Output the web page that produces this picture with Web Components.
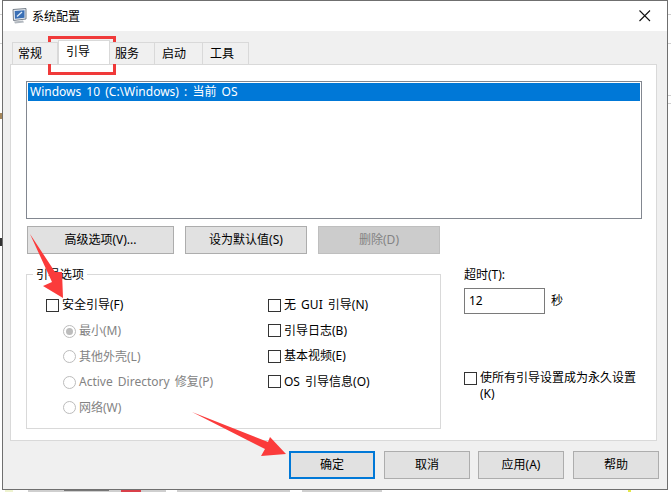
<!DOCTYPE html>
<html><head><meta charset="utf-8"><style>
html,body{margin:0;padding:0;background:#fff}
body{width:671px;height:492px;overflow:hidden;font:12px "Noto Sans","Noto Sans CJK SC",sans-serif;color:#000;position:relative}
</style></head><body>
<msc-window>
  <msc-tabs slot="tabs"></msc-tabs>
  <msc-boot slot="panel"></msc-boot>
  <win-btn slot="foot" focus style="width:86px">确定</win-btn>
  <win-btn slot="foot" style="width:86px;margin-left:9px">取消</win-btn>
  <win-btn slot="foot" style="width:86px;margin-left:8px">应用(A)</win-btn>
  <win-btn slot="foot" style="width:86px;margin-left:9px">帮助</win-btn>
</msc-window>
<msc-marks></msc-marks>
<script>
const F='"Noto Sans","Noto Sans CJK SC",sans-serif';
function def(name,css,html){
  customElements.define(name,class extends HTMLElement{
    constructor(){super();const s=this.attachShadow({mode:'open'});s.innerHTML='<style>'+css+'</style>'+html;}
  });
}
def('win-btn',`:host{display:flex;box-sizing:border-box;height:28px;align-items:center;justify-content:center;background:#e1e1e1;border:1px solid #adadad;font:12px/16px ${F};color:#000;white-space:nowrap}
:host([focus]){border:2px solid #0078d7}
:host([disabled]){background:#ccc;border-color:#bfbfbf;color:#838383}`,`<slot></slot>`);
def('win-check',`:host{display:flex;align-items:center;height:14px;font:12px/14px ${F};color:#000;white-space:pre;word-spacing:2px}
i{display:block;box-sizing:border-box;width:13px;height:13px;border:1px solid #333;background:#fff;margin-right:3px;flex:none}`,`<i></i><slot></slot>`);
def('win-radio',`:host{display:flex;align-items:center;height:14px;font:12px/14px ${F};color:#838383;white-space:pre;word-spacing:2px}
i{display:flex;align-items:center;justify-content:center;box-sizing:border-box;width:13px;height:13px;border:1px solid #bcbcbc;border-radius:50%;background:#fff;margin-right:3px;flex:none}
b{display:none;width:7px;height:7px;border-radius:50%;background:#bcbcbc}
:host([on]) b{display:block}`,`<i><b></b></i><slot></slot>`);
def('msc-window',`:host{box-sizing:border-box;width:666px;height:490px;margin-left:2px;border:1px solid #6f6f6f;background:#f0f0f0;display:flex;flex-direction:column}
.tb{height:30px;background:#fff;display:flex;align-items:center;flex:none;padding-left:8px;font:12px/16px ${F}}
.tb svg.ic{width:16px;height:16px;margin:-1px 5px 0 0;flex:none}
.tb span{flex:1;margin-top:1px}
.tb svg.x{width:12px;height:12px;margin-right:16px;flex:none}
.tabs{height:33px;padding:10px 0 0 7px;box-sizing:border-box;flex:none}
.panel{margin:0 9px 0 7px;height:377px;flex:none}
.foot{display:flex;padding:10px 0 0 286px}`,`
<div class="tb"><svg class="ic" viewBox="0 0 16 16"><path d="M2 1.5 15 .5v10.5L2.5 12.5z" fill="#e6ebf1" stroke="#6b7480" stroke-width=".9"/><path d="M3.7 3 13.5 2.2v7.5L4 10.8z" fill="#3a6fb5"/><path d="M6 8.5l5-4.5" stroke="#e0eefb" stroke-width="1.3"/><path d="M3 13.5 12 12.5l1 2-9 1z" fill="#b2b8bf"/></svg><span>系统配置</span><svg class="x" viewBox="0 0 12 12"><path d="M.5.5l10.5 10.5M11 .5.5 11" stroke="#111" stroke-width="1.1" fill="none"/></svg></div>
<div class="tabs"><slot name="tabs"></slot></div>
<div class="panel"><slot name="panel"></slot></div>
<div class="foot"><slot name="foot"></slot></div>`);
def('msc-tabs',`:host{display:flex;height:23px;position:relative;z-index:1;font:12px/16px ${F}}
div{box-sizing:border-box;height:22px;margin-top:1px;border:1px solid #d9d9d9;border-left:0;border-bottom:0;background:#f0f0f0;padding:3px 0 0 5px}
div:first-of-type{border-left:1px solid #d9d9d9;margin-left:2px}
div.on{height:24px;margin-top:-1px;background:#fff;padding:3px 0 0 7px;border-left:1px solid #d9d9d9}`,
`<div style="width:46px">常规</div><div class="on" style="width:52px">引导</div><div style="width:45px">服务</div><div style="width:48px;padding-left:7px">启动</div><div style="width:46px;padding-left:7px">工具</div>`);
def('msc-boot',`:host{display:block;box-sizing:border-box;width:647px;height:377px;background:#fff;border:1px solid #d9d9d9;padding:16px 15px 0 15px;font:12px/16px ${F}}
.list{box-sizing:border-box;height:138px;width:616px;border:1px solid #828790;padding:1px}
.sel{height:18px;background:#0078d7;color:#fff;padding-left:2px;line-height:18px;word-spacing:2px}
.btns{display:flex;margin-top:7px;padding-left:1px}
.low{display:flex;margin-top:20px}
.group{box-sizing:border-box;width:415px;height:155px;flex:none;border:1px solid #d9d9d9;position:relative;padding:23px 0 0 19px;display:flex}
.legend{position:absolute;left:6px;top:-8px;background:#fff;padding:0 3px;line-height:16px}
.c1{width:222px}
.c1 win-radio{margin-left:17px}
.c1 win-radio:first-of-type{margin-top:12px}
.gap win-radio,.gap win-check{margin-bottom:11.5px}
.side{margin-left:23px;position:relative;width:180px;flex:none}
.t{line-height:14px;margin-top:-6px}
.in{box-sizing:border-box;width:81px;height:26px;border:1px solid #7a7a7a;display:flex;align-items:center;padding-left:4px;margin-top:6px}
.row{display:flex;align-items:center}.sec{margin-left:6px}
.perm{margin-top:57px;display:flex;align-items:flex-start;width:180px}
.perm win-check{flex:none;width:16px}
.perm span{line-height:16px;margin-top:-1px}`,`
<div class="list"><div class="sel">Windows 10 (C:\\Windows) : 当前 OS</div></div>
<div class="btns">
<win-btn style="width:147px">高级选项(V)...</win-btn>
<win-btn style="width:122px;margin-left:11px">设为默认值(S)</win-btn>
<win-btn disabled style="width:122px;margin-left:11px">删除(D)</win-btn></div>
<div class="low"><div class="group"><div class="legend">引导选项</div>
<div class="c1 gap"><win-check>安全引导(F)</win-check><win-radio on>最小(M)</win-radio><win-radio>其他外壳(L)</win-radio><win-radio>Active Directory 修复(P)</win-radio><win-radio>网络(W)</win-radio></div>
<div class="c2 gap"><win-check>无 GUI 引导(N)</win-check><win-check>引导日志(B)</win-check><win-check>基本视频(E)</win-check><win-check>OS 引导信息(O)</win-check></div>
</div>
<div class="side"><div class="t">超时(T):</div><div class="row"><div class="in">12</div><div class="sec" style="margin-top:6px">秒</div></div>
<div class="perm"><win-check></win-check><span>使所有引导设置成为永久设置<br>(K)</span></div></div></div>`);
def('msc-marks',`:host{position:absolute;inset:0;display:block;pointer-events:none}
svg{position:absolute;left:0;top:0}`,`<svg width="671" height="492" viewBox="0 0 671 492">
<g fill="#cfcfcf"><rect x="0" y="14" width="2" height="1"/><rect x="0" y="43" width="2" height="1"/><rect x="668" y="14" width="3" height="1"/><rect x="668" y="43" width="3" height="1"/><rect x="668" y="95" width="3" height="1"/><rect x="668" y="103" width="3" height="1"/>
<rect x="28" y="490" width="138" height="2"/><rect x="177" y="490" width="113" height="2"/><rect x="302" y="490" width="80" height="2"/></g>
<rect x="5" y="490" width="8" height="2" fill="#eef3cf"/><rect x="64" y="490" width="45" height="1" fill="#777"/><rect x="121" y="490" width="20" height="2" fill="#d9404a"/>
<rect x="628" y="490" width="3" height="2" fill="#e4e84a"/><rect x="0" y="113" width="2" height="6" fill="#a5865a"/><rect x="0" y="238" width="2" height="8" fill="#333"/>
<rect x="49.5" y="37.5" width="65" height="36" fill="none" stroke="#f03a3a" stroke-width="3"/>
<path d="M30 234 L55 272 L62 272 L63 298 L43 286 L52 282z" fill="#fb3b3b"/>
<path d="M192 412 L268 442 L270 437 L286 454 L261 456 L265 449z" fill="#fb3b3b"/>
</svg>`);
</script></body></html>
